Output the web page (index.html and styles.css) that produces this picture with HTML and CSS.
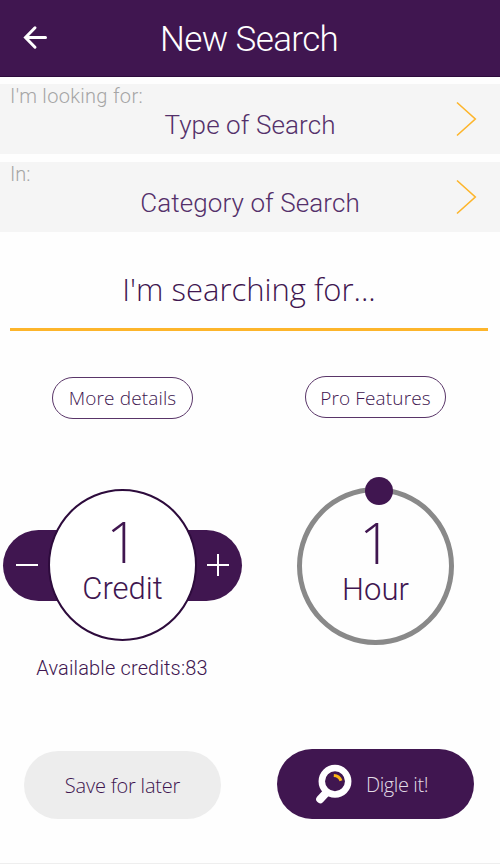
FILE: index.html
```
<!DOCTYPE html>
<html lang="en">
<head>
    <meta charset="UTF-8">
    <meta name="viewport" content="width=device-width, initial-scale=1.0">
    <title>New Search</title>
    <link rel="stylesheet" href="styles.css">
</head>
<body>
    <header class="header">
        <svg class="back" width="26" height="26" viewBox="0 0 26 26">
            <path d="M23.5 12.5H3.5M13 2.8L3.5 12.5l9.5 9.7" />
        </svg>
        <h1>New Search</h1>
    </header>

    <div class="field">
        <div class="field-label looking">I'm looking for:</div>
        <div class="field-value type">Type of Search</div>
        <svg class="chevron" width="22" height="36" viewBox="0 0 22 36">
            <path d="M1 1.5L19.3 18L1 34.5" />
        </svg>
    </div>
    <div class="field">
        <div class="field-label">In:</div>
        <div class="field-value category">Category of Search</div>
        <svg class="chevron" width="22" height="36" viewBox="0 0 22 36">
            <path d="M1 1.5L19.3 18L1 34.5" />
        </svg>
    </div>

    <div class="search-box"><span>I'm searching for...</span></div>

    <div class="options">
        <button class="pill more"><span>More details</span></button>
        <button class="pill pro"><span>Pro Features</span></button>
    </div>

    <div class="pickers">
        <div class="credit">
            <div class="stepper">
                <svg width="24" height="24" viewBox="0 0 24 24"><path d="M1 12h22" /></svg>
                <svg width="24" height="24" viewBox="0 0 24 24"><path d="M1 12h22M12 1v22" /></svg>
            </div>
            <div class="credit-circle">
                <div class="number">1</div>
                <div class="unit">Credit</div>
            </div>
        </div>
        <div class="hour">
            <div class="number">1</div>
            <div class="unit">Hour</div>
            <div class="knob"></div>
        </div>
    </div>
    <p class="available"><span>Available credits:83</span></p>

    <div class="actions">
        <button class="btn save"><span>Save for later</span></button>
        <button class="btn digle">
            <svg width="38" height="42" viewBox="0 0 38 42">
                <circle class="lens" cx="20" cy="18.3" r="13.2" />
                <path class="handle" d="M11 30L5.2 36.2" />
                <path class="shine" d="M18.8 12.4q5.6 .3 7.2 5.4" />
            </svg>
            <span>Digle it!</span>
        </button>
    </div>
</body>
</html>
```
FILE: styles.css
```
* {
    box-sizing: border-box;
}
body {
    margin: 0;
    height: 864px;
    background-color: #fefefe;
    border-bottom: 1px solid #eeeeee;
    font-family: "Open Sans", sans-serif;
    font-weight: 300;
    color: #401650;
    overflow: hidden;
}
svg {
    fill: none;
}
button {
    padding: 0;
    font: inherit;
    color: inherit;
}
span {
    white-space: nowrap;
}
.header {
    display: flex;
    align-items: center;
    height: 77px;
    padding-left: 22px;
    background-color: #401650;
    border-bottom: 1px solid #2d0b3c;
    color: #ffffff;
}
.back {
    stroke: #ffffff;
    stroke-width: 3;
    stroke-linecap: round;
}
.header h1 {
    margin: 3px 0 0 112px;
    font-family: Roboto, sans-serif;
    font-size: 35px;
    font-weight: 300;
    letter-spacing: -0.6px;
    white-space: nowrap;
}
.field {
    display: grid;
    grid-template-columns: 10px 1fr 44px;
    grid-template-rows: 24px 46px;
    height: 70px;
    margin-top: 7px;
    background-color: #f5f5f5;
    font-family: Roboto, sans-serif;
}
.field + .field {
    margin-top: 8px;
}
.field-label {
    grid-column: 2;
    grid-row: 1;
    font-size: 20px;
    line-height: 25px;
    color: #a5a5a5;
}
.looking {
    letter-spacing: 0.3px;
}
.field-value {
    grid-column: 1 / 4;
    grid-row: 2;
    font-size: 26px;
    line-height: 34px;
    letter-spacing: 0.1px;
    text-align: center;
    color: #54306a;
}
.chevron {
    grid-column: 3;
    grid-row: 1 / 3;
    align-self: center;
    stroke: #fdb52b;
    stroke-width: 1.6;
}
.search-box {
    height: 99px;
    margin: 0 12px 0 10px;
    padding-top: 35px;
    border-bottom: 3px solid #fdb52b;
    font-size: 31px;
    line-height: 44px;
    text-align: center;
}
.options {
    display: flex;
    justify-content: space-between;
    padding: 45px 54px 0 52px;
}
.pill {
    width: 141px;
    height: 42px;
    border: 1.5px solid #593568;
    border-radius: 21px;
    background-color: #ffffff;
    font-size: 19px;
    letter-spacing: 0.15px;
}
.more {
    margin-top: 1px;
}
.pro {
    padding-top: 2px;
}
.pickers {
    display: flex;
    justify-content: space-between;
    height: 156px;
    margin-top: 70px;
    padding: 0 46px 0 3px;
}
.number {
    font-size: 57px;
    line-height: 60px;
}
.unit {
    font-family: Roboto, sans-serif;
    font-size: 31px;
    line-height: 36px;
}
.credit {
    display: grid;
    width: 239px;
    height: 152px;
    justify-items: center;
    align-items: center;
}
.credit > div {
    grid-area: 1 / 1;
}
.stepper {
    display: flex;
    justify-content: space-between;
    align-items: center;
    width: 239px;
    height: 71px;
    padding: 0 12px;
    border-radius: 36px;
    background-color: #401650;
}
.stepper svg {
    stroke: #ffffff;
    stroke-width: 2;
}
.credit-circle {
    width: 149px;
    height: 152px;
    padding-top: 20px;
    border: 2px solid #2d0b3c;
    border-radius: 50%;
    background-color: #ffffff;
    text-align: center;
}
.hour {
    position: relative;
    width: 157px;
    height: 158px;
    margin-top: -2px;
    padding-top: 20px;
    border: 5px solid #898989;
    border-radius: 50%;
    text-align: center;
}
.knob {
    position: absolute;
    top: -15px;
    left: 63px;
    width: 28px;
    height: 28px;
    border-radius: 50%;
    background-color: #401650;
}
.available {
    width: 244px;
    margin: 10px 0 0;
    font-family: Roboto, sans-serif;
    font-size: 20px;
    line-height: 26px;
    letter-spacing: 0.15px;
    text-align: center;
}
.actions {
    display: flex;
    justify-content: space-between;
    padding: 68px 26px 0 24px;
}
.btn {
    display: flex;
    align-items: center;
    justify-content: center;
    width: 197px;
    height: 68px;
    border: none;
    border-radius: 34px;
    font-size: 20px;
    letter-spacing: -0.2px;
}
.save {
    margin-top: 2px;
    background-color: #ededed;
}
.digle {
    height: 70px;
    padding-right: 8px;
    border-radius: 35px;
    gap: 13px;
    background-color: #401650;
    color: #e2dce5;
    letter-spacing: -0.4px;
}
.lens {
    stroke: #ffffff;
    stroke-width: 6.5;
}
.handle {
    stroke: #ffffff;
    stroke-width: 8;
    stroke-linecap: round;
}
.shine {
    stroke: #fdb714;
    stroke-width: 3;
}
```
